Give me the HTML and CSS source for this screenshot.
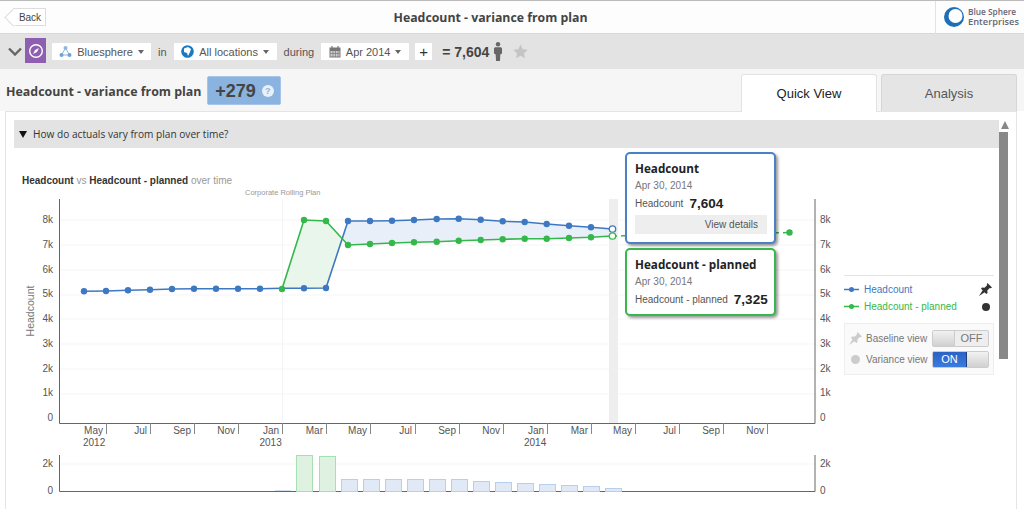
FILE: index.html
```html
<!DOCTYPE html>
<html lang="en">
<head>
<meta charset="utf-8">
<title>Headcount - variance from plan</title>
<link rel="stylesheet" href="styles.css">
</head>
<body>
<header class="topbar">
  <button class="back"><span>Back</span></button>
  <h1 class="page-title">Headcount - variance from plan</h1>
  <div class="logo">
    <svg width="22" height="22" viewBox="0 0 22 22"><circle cx="11" cy="11" r="10" fill="#1f6fb8"/><circle cx="12.5" cy="10" r="7" fill="#fff"/></svg>
    <div class="logo-text"><span>Blue Sphere</span><span class="logo-big">Enterprises</span></div>
  </div>
</header>

<nav class="toolbar">
  <svg class="chevron" width="14" height="9" viewBox="0 0 14 9"><path d="M1 1.5 7 7.5 13 1.5" fill="none" stroke="#666" stroke-width="2.4"/></svg>
  <div class="compass">
    <svg width="16" height="16" viewBox="0 0 16 16"><circle cx="8" cy="8" r="6.3" fill="none" stroke="#fff" stroke-width="1.4"/><path d="M11 5 9 9 5 11 7 7Z" fill="#fff"/></svg>
  </div>
  <button class="pick pick-org">
    <svg width="13" height="13" viewBox="0 0 13 13"><path d="M6.5 3 2.5 10M6.5 3l4 7M2.500 10h8" stroke="#8db6e0" stroke-width="1" fill="none"/><circle cx="6.500" cy="3" r="2" fill="#8db6e0"/><circle cx="2.500" cy="10" r="2" fill="#6fa2d8"/><circle cx="10.500" cy="10" r="2" fill="#6fa2d8"/></svg>
    Bluesphere <i class="caret"></i>
  </button>
  <span class="word">in</span>
  <button class="pick pick-loc">
    <svg width="13" height="13" viewBox="0 0 13 13"><circle cx="6.500" cy="6.500" r="6.300" fill="#1c79c0"/><path d="M3 3.500 7 2l3 2-1 3-2 4-1-3-3-1Z" fill="#fff"/></svg>
    All locations <i class="caret"></i>
  </button>
  <span class="word">during</span>
  <button class="pick pick-date">
    <svg width="12" height="12" viewBox="0 0 12 12"><rect x=".5" y="1.500" width="11" height="10" fill="#777"/><path d="M1.500 5h9v5.500h-9z" fill="#ccc"/><path d="M4 5v6M6.500 5v6M9 5v6M1.500 7.500h9" stroke="#777" stroke-width=".7"/><path d="M3 0v3M9 0v3" stroke="#777" stroke-width="1.200"/></svg>
    Apr 2014 <i class="caret"></i>
  </button>
  <button class="plus">+</button>
  <strong class="total">= 7,604</strong>
  <svg class="person" width="8" height="19" viewBox="0 0 8 19"><circle cx="4" cy="2.200" r="2.200" fill="#666"/><path d="M1 5.200h6l1 1v5.300L6.300 12.500 6 19H2l-.3-6.500L0 11.500V6.200Z" fill="#666"/></svg>
  <svg class="star" width="15" height="15" viewBox="0 0 15 15"><path d="M7.500.5 9.700 5.200l5 .6-3.700 3.400 1 5-4.500-2.500L3 14.200l1-5L.3 5.800l5-.6Z" fill="#c4c4c4"/></svg>
</nav>

<section class="subhead">
  <h2 class="sub-title">Headcount - variance from plan</h2>
  <div class="badge"><span class="badge-num">+279</span> <span class="help">?</span></div>
  <div class="tabs">
    <div class="tab tab-on">Quick View</div>
    <div class="tab">Analysis</div>
  </div>
</section>

<main class="panel">
  <div class="question"><i class="tri"></i>How do actuals vary from plan over time?</div>
  <div class="scroll-arrow"></div>
  <div class="scroll-thumb"></div>

  <div class="chart-row">
    <svg class="chart" width="830" height="361" viewBox="14 148 830 361">
      <text class="title" x="22" y="184"><tspan class="b">Headcount</tspan> vs <tspan class="b">Headcount - planned</tspan> over time</text>
      <text class="plan" x="245" y="195">Corporate Rolling Plan</text>

      <g class="grid">
        <path d="M60 220H815M60 245H815M60 270H815M60 295H815M60 319H815M60 344H815M60 369H815M60 394H815M60 464H815"/>
      </g>
      <rect x="609" y="199" width="9" height="224" fill="#eeeeee"/>
      <path d="M282.500 199V423" stroke="#f4f4f4" stroke-width="1"/>

      <polygon fill="#e9f6ec" points="282,289 304,220 326,221 342,239 326,288 304,288"/>
      <polygon fill="#e9eff9" points="342,239 348,221 370,221 392,220.700 414,220 436.700,219 458.700,218.700 480.700,219.700 502.700,221.300 524.700,222 546.700,224 569,225.700 591,227.300 612,229 612,236 591,237.300 569,238 546.700,238.700 524.700,238.700 502.700,239.300 480.700,240 458.700,240.700 436.700,241.700 414,242.300 392,243 370,244 348,245"/>

      <path d="M612 236 790 232.500" stroke="#35b84b" stroke-width="1.500" stroke-dasharray="5 4" fill="none"/>
      <polyline class="l-blue" points="84,291.300 106,291 128,290.300 150,289.700 172,289 194,288.700 216,288.700 238,288.700 260,288.700 282,288.300 304,288.300 326,288 348,221 370,221 392,220.700 414,220 436.700,219 458.700,218.700 480.700,219.700 502.700,221.300 524.700,222 546.700,224 569,225.700 591,227.300 612,229"/>
      <polyline class="l-green" points="282,289 304,220 326,221 348,245 370,244 392,243 414,242.300 436.700,241.700 458.700,240.700 480.700,240 502.700,239.300 524.700,238.700 546.700,238.700 569,238 591,237.300 612,236"/>

      <g class="d-blue">
        <circle cx="84" cy="291.300" r="3.200"/><circle cx="106" cy="291" r="3.200"/><circle cx="128" cy="290.300" r="3.200"/><circle cx="150" cy="289.700" r="3.200"/><circle cx="172" cy="289" r="3.200"/><circle cx="194" cy="288.700" r="3.200"/><circle cx="216" cy="288.700" r="3.200"/><circle cx="238" cy="288.700" r="3.200"/><circle cx="260" cy="288.700" r="3.200"/><circle cx="304" cy="288.300" r="3.200"/><circle cx="326" cy="288" r="3.200"/><circle cx="348" cy="221" r="3.200"/><circle cx="370" cy="221" r="3.200"/><circle cx="392" cy="220.700" r="3.200"/><circle cx="414" cy="220" r="3.200"/><circle cx="436.700" cy="219" r="3.200"/><circle cx="458.700" cy="218.700" r="3.200"/><circle cx="480.700" cy="219.700" r="3.200"/><circle cx="502.700" cy="221.300" r="3.200"/><circle cx="524.700" cy="222" r="3.200"/><circle cx="546.700" cy="224" r="3.200"/><circle cx="569" cy="225.700" r="3.200"/><circle cx="591" cy="227.300" r="3.200"/>
      </g>
      <g class="d-green">
        <circle cx="282" cy="289" r="3.200"/><circle cx="304" cy="220" r="3.200"/><circle cx="326" cy="221" r="3.200"/><circle cx="348" cy="245" r="3.200"/><circle cx="370" cy="244" r="3.200"/><circle cx="392" cy="243" r="3.200"/><circle cx="414" cy="242.300" r="3.200"/><circle cx="436.700" cy="241.700" r="3.200"/><circle cx="458.700" cy="240.700" r="3.200"/><circle cx="480.700" cy="240" r="3.200"/><circle cx="502.700" cy="239.300" r="3.200"/><circle cx="524.700" cy="238.700" r="3.200"/><circle cx="546.700" cy="238.700" r="3.200"/><circle cx="569" cy="238" r="3.200"/><circle cx="591" cy="237.300" r="3.200"/><circle cx="789.500" cy="232.500" r="3.200"/>
      </g>
      <circle cx="612.500" cy="229" r="3.200" fill="#fff" stroke="#3f78c2" stroke-width="1.300"/>
      <circle cx="612.500" cy="236" r="3.200" fill="#fff" stroke="#35b84b" stroke-width="1.300"/>

      <path class="axis" d="M59.500 199V423.500H815V199"/>
      <path class="axis" d="M59.500 455V491.500H815V455"/>
      <path class="ticks" d="M106.500 423V434M150.500 423V434M194.500 423V434M238.500 423V434M282.500 423V434M326.500 423V434M370.500 423V434M415.500 423V434M459.500 423V434M503.500 423V434M547.500 423V434M591.500 423V434M635.500 423V434M679.500 423V434M723.500 423V434M767.500 423V434"/>

      <g class="lbl end">
        <text x="53" y="223">8k</text><text x="53" y="248">7k</text><text x="53" y="273">6k</text><text x="53" y="297">5k</text><text x="53" y="322">4k</text><text x="53" y="347">3k</text><text x="53" y="372">2k</text><text x="53" y="396">1k</text><text x="53" y="421">0</text>
        <text x="53" y="467">2k</text><text x="53" y="494">0</text>
        <text x="103" y="434">May</text><text x="147" y="434">Jul</text><text x="191" y="434">Sep</text><text x="235" y="434">Nov</text><text x="279" y="434">Jan</text><text x="323" y="434">Mar</text><text x="367" y="434">May</text><text x="412" y="434">Jul</text><text x="456" y="434">Sep</text><text x="500" y="434">Nov</text><text x="544" y="434">Jan</text><text x="588" y="434">Mar</text><text x="632" y="434">May</text><text x="676" y="434">Jul</text><text x="720" y="434">Sep</text><text x="764" y="434">Nov</text>
      </g>
      <g class="lbl">
        <text x="820" y="223">8k</text><text x="820" y="248">7k</text><text x="820" y="273">6k</text><text x="820" y="297">5k</text><text x="820" y="322">4k</text><text x="820" y="347">3k</text><text x="820" y="372">2k</text><text x="820" y="396">1k</text><text x="820" y="421">0</text>
        <text x="820" y="467">2k</text><text x="820" y="494">0</text>
        <text x="83" y="446">2012</text><text x="259.500" y="446">2013</text><text x="524" y="446">2014</text>
      </g>
      <text class="ytitle" transform="translate(34 311) rotate(-90)" text-anchor="middle">Headcount</text>

      <g class="bar-g">
        <rect x="296.500" y="455.500" width="16" height="36"/><rect x="319.500" y="456.500" width="16" height="35"/>
      </g>
      <path d="M275 490.500H291" stroke="#d3e0f1" stroke-width="1"/>
      <g class="bar-b">
        <rect x="341.500" y="479.500" width="16" height="12"/><rect x="363.500" y="479.500" width="16" height="12"/><rect x="385.500" y="479.500" width="16" height="12"/><rect x="407.500" y="479.500" width="16" height="12"/><rect x="429.500" y="479.500" width="16" height="12"/><rect x="451.500" y="479.500" width="16" height="12"/><rect x="473.500" y="481.500" width="16" height="10"/><rect x="495.500" y="482.500" width="16" height="9"/><rect x="517.500" y="483.500" width="16" height="8"/><rect x="539.500" y="484.500" width="16" height="7"/><rect x="561.500" y="485.500" width="16" height="6"/><rect x="583.500" y="486.500" width="16" height="5"/><rect x="605.500" y="488.500" width="16" height="3"/>
      </g>
    </svg>

    <div class="tip tip-blue">
      <div class="tip-title">Headcount</div>
      <div class="tip-date">Apr 30, 2014</div>
      <div class="tip-val"><span>Headcount</span><b>7,604</b></div>
      <div class="tip-link">View details</div>
    </div>
    <div class="tip tip-green">
      <div class="tip-title">Headcount - planned</div>
      <div class="tip-date">Apr 30, 2014</div>
      <div class="tip-val"><span>Headcount - planned</span><b>7,325</b></div>
    </div>

    <aside class="side">
      <div class="legend">
        <div class="leg-row leg-blue">
          <svg width="15" height="7" viewBox="0 0 15 7"><path d="M0 3.500H15" stroke="#3f78c2" stroke-width="1.500"/><circle cx="7.500" cy="3.500" r="2.500" fill="#3f78c2"/></svg>
          <span>Headcount</span>
          <svg class="leg-end" width="13" height="13" viewBox="0 0 13 13"><path d="M8.500 0 13 4.500 11.800 5.200 10.800 4.900 8.300 7.500 8.600 10 7.300 11 2 5.700 3 4.400 5.500 4.700 8.100 2.200 7.800 1.200ZM3.700 7.300 5.700 9.300 0 13Z" fill="#333"/></svg>
        </div>
        <div class="leg-row leg-green">
          <svg width="15" height="7" viewBox="0 0 15 7"><path d="M0 3.500H15" stroke="#35b84b" stroke-width="1.500"/><circle cx="7.500" cy="3.500" r="2.500" fill="#35b84b"/></svg>
          <span>Headcount - planned</span>
          <i class="leg-dot"></i>
        </div>
      </div>
      <div class="views">
        <div class="view-row">
          <svg class="view-ic" width="13" height="13" viewBox="0 0 13 13"><path d="M8.500 0 13 4.500 11.800 5.200 10.800 4.900 8.300 7.500 8.600 10 7.300 11 2 5.700 3 4.400 5.500 4.700 8.100 2.200 7.800 1.200ZM3.700 7.300 5.700 9.300 0 13Z" fill="#ccc"/></svg>
          <span class="view-name">Baseline view</span>
          <div class="toggle"><i class="knob knob-left"></i><span class="off">OFF</span></div>
        </div>
        <div class="view-row">
          <span class="view-ic view-dot"></span>
          <span class="view-name">Variance view</span>
          <div class="toggle"><span class="on">ON</span><i class="knob"></i></div>
        </div>
      </div>
    </aside>
  </div>
</main>
</body>
</html>
```

FILE: styles.css
```css
* { box-sizing: border-box; }
html, body { margin: 0; height: 509px; overflow: hidden; }
body { background: #fff; font-family: "Liberation Sans", Arial, sans-serif; color: #444; }
button { font: inherit; color: inherit; margin: 0; }

.topbar { height: 34px; display: flex; align-items: center; position: relative; background: #fdfdfd; border-top: 1px solid #bbb; border-bottom: 1px solid #d8d8d8; }
.back { position: relative; margin-left: 13px; width: 33px; height: 18px; padding: 0 0 0 2px; border: 1px solid #ddd; border-left: 0; background: #fff; font-size: 10px; color: #444; }
.back::before { content: ""; position: absolute; left: -6px; top: 2px; width: 12px; height: 12px; background: #fff; border-left: 1px solid #ddd; border-bottom: 1px solid #ddd; transform: rotate(45deg); }
.back span { position: relative; }
.page-title { position: absolute; left: 4px; right: 47px; text-align: center; margin: 0; font: 700 12.300px "Open Sans", sans-serif; color: #444; }
.logo { margin-left: auto; width: 89px; height: 33px; border-left: 1px solid #e2e2e2; display: flex; align-items: center; padding-left: 7px; gap: 3px; }
.logo-text { display: flex; flex-direction: column; font: 600 8.300px/10px "Open Sans", sans-serif; color: #667; white-space: nowrap; }
.logo-big { font-size: 9.300px; line-height: 10px; }

.toolbar { height: 35px; background: #e3e3e3; display: flex; align-items: center; padding-left: 8px; font-size: 11px; }
.chevron { margin-right: 3px; }
.compass { width: 21px; height: 25px; margin-bottom: 2px; background: #8e5fb0; display: flex; align-items: center; justify-content: center; margin-right: 6px; }
.pick { height: 17px; background: #fff; border: 0; border-radius: 1px; display: flex; align-items: center; justify-content: center; gap: 5px; padding: 0; font-size: 11px; color: #555; white-space: nowrap; }
.pick-org { width: 99px; }
.pick-loc { width: 103px; }
.pick-date { width: 88px; }
.caret { display: inline-block; width: 0; height: 0; border: 3px solid transparent; border-top: 4px solid #666; border-bottom: 0; }
.word { color: #555; margin: 0 7px; }
.plus { width: 17px; height: 17px; margin-left: 6px; background: #fff; border: 0; padding: 0; font-size: 15px; line-height: 17px; color: #333; }
.total { margin-left: 10px; font-size: 14px; color: #444; white-space: nowrap; }
.person { margin-left: 5px; }
.star { margin-left: 11px; }

.subhead { height: 42px; background: #f6f6f6; display: flex; padding-left: 6px; }
.sub-title { margin: 0; align-self: center; font: 700 12.400px "Open Sans", sans-serif; color: #444; white-space: nowrap; padding-top: 2px; }
.badge { width: 74px; height: 29px; margin: 7px 0 0 6px; background: #8ab4df; border: 1px solid #a5c6e8; border-radius: 2px; display: flex; align-items: center; justify-content: center; gap: 6px; font-size: 18px; font-weight: 700; color: #444; }
.badge-num { padding-top: 1px; }
.help { width: 12px; height: 12px; border-radius: 50%; background: #e8f0f8; color: #8ab4df; font-size: 9px; line-height: 12px; text-align: center; }
.tabs { margin-left: auto; margin-right: 7px; padding-top: 5px; display: flex; gap: 4px; position: relative; z-index: 1; }
.tab { width: 136px; height: 37px; border: 1px solid #d6d6d6; border-bottom: 0; border-radius: 3px 3px 0 0; background: #e5e5e5; display: flex; align-items: center; justify-content: center; font-size: 13px; color: #555; }
.tab-on { height: 38px; background: #fff; color: #222; border-color: #e2e2e2; }

.panel { position: relative; margin: 0 7px 0 5px; height: 398px; border: 1px solid #e4e4e4; border-bottom: 0; padding: 8px 0 0 8px; overflow: hidden; background: #fff; }
.question { width: 985px; height: 28px; background: #e3e3e3; display: flex; align-items: center; font: 400 10.150px "Open Sans", sans-serif; color: #333; padding-left: 5px; }
.tri { width: 0; height: 0; margin-right: 6px; border: 4px solid transparent; border-top: 7px solid #111; border-bottom: 0; }
.scroll-arrow { position: absolute; left: 995px; top: 9px; width: 0; height: 0; border: 4.500px solid transparent; border-bottom: 8px solid #888; border-top: 0; }
.scroll-thumb { position: absolute; left: 993px; top: 20px; width: 9px; height: 227px; background: #888; }

.chart-row { position: relative; display: flex; height: 361px; }
.chart { display: block; flex: none; }
.title { font-size: 10px; fill: #999; }
.title .b { font-weight: 700; fill: #333; }
.plan { font-size: 7.500px; fill: #999; }
.grid path { stroke: #f5f5f5; stroke-width: 1; fill: none; }
.l-blue, .l-green { fill: none; stroke-width: 1.600; }
.l-blue { stroke: #3f78c2; }
.l-green { stroke: #35b84b; }
.d-blue { fill: #3f78c2; }
.d-green { fill: #35b84b; }
.axis { fill: none; stroke: #666; stroke-width: 1; }
.ticks { stroke: #888; stroke-width: 1; }
.lbl { font-size: 10px; fill: #555; }
.lbl.end { text-anchor: end; }
.ytitle { font-size: 10.500px; fill: #777; }
.bar-g rect { fill: #dff2e2; stroke: #a8dfb2; stroke-width: 1; }
.bar-b rect { fill: #e0e9f5; stroke: #b6cfec; stroke-width: 1; }

.tip { position: absolute; left: 611px; width: 151px; background: #fff; border: 2px solid; border-radius: 5px; box-shadow: 2px 2px 3px rgba(0,0,0,.4); padding: 6px 8px 0; }
.tip-blue { top: 4px; height: 92px; border-color: #4a80c4; }
.tip-green { top: 100px; height: 68px; border-color: #38b84c; }
.tip-title { font: 700 11.700px/17px "Open Sans", sans-serif; color: #222; white-space: nowrap; }
.tip-date { margin-top: 2px; font-size: 10px; line-height: 13px; color: #777; }
.tip-val { margin-top: 3px; display: flex; align-items: center; gap: 6px; font-size: 10px; line-height: 17px; color: #555; white-space: nowrap; }
.tip-val b { font-size: 13.500px; color: #222; }
.tip-link { margin: 3px -1px 0 0; height: 19px; background: #eee; font-size: 10px; line-height: 19px; text-align: right; padding-right: 9px; color: #555; }

.side { width: 150px; flex: none; padding-top: 127px; }
.legend { border-top: 1px solid #e4e4e4; padding-top: 5px; }
.leg-row { height: 17px; display: flex; align-items: center; gap: 5px; font-size: 10px; }
.leg-blue { color: #3f78c2; }
.leg-green { color: #35b84b; }
.leg-end { margin-left: auto; margin-right: 2px; }
.leg-dot { margin-left: auto; margin-right: 4px; width: 8px; height: 8px; border-radius: 50%; background: #333; }
.views { margin-top: 8px; height: 52px; padding: 6px 4px 0 4px; background: #fafafa; border: 1px solid #eee; display: flex; flex-direction: column; gap: 4px; }
.view-row { display: flex; align-items: center; height: 17px; font-size: 10px; color: #777; }
.view-ic { width: 13px; height: 13px; flex: none; }
.view-dot { border-radius: 50%; background: #ccc; width: 9px; height: 9px; margin: 0 2px; }
.view-name { margin-left: 4px; white-space: nowrap; }
.toggle { margin-left: auto; width: 57px; height: 17px; display: flex; border: 1px solid #ccc; border-radius: 2px; background: #eee; overflow: hidden; font-size: 11px; }
.knob { flex: 1; background: linear-gradient(#f2f2f2, #d0d0d0); }
.knob-left { flex: none; width: 22px; border-right: 1px solid #ccc; }
.off { flex: 1; text-align: center; line-height: 15px; color: #777; }
.on { width: 34px; flex: none; background: linear-gradient(#2b62c4, #3b7be0); color: #fff; text-align: center; line-height: 15px; border-right: 1px solid #1d3f80; }
```
